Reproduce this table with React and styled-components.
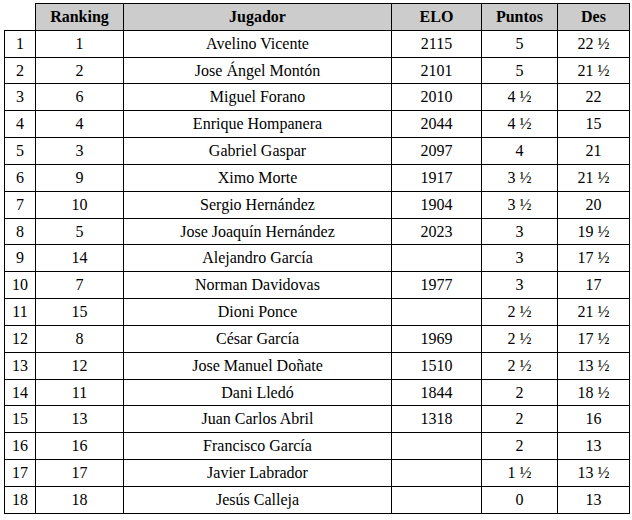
import React from "react";
import styled, { createGlobalStyle } from "styled-components";

const Global = createGlobalStyle`
  html, body { margin: 0; padding: 0; background: #ffffff; }
  body { font-family: "Liberation Serif", "Times New Roman", serif; color: #000; }
`;

const Page = styled.div`
  padding: 3px 0 0 4px;
`;

const Table = styled.table`
  border-collapse: collapse;
  table-layout: fixed;
  width: 625px;
  font-family: "Liberation Serif", "Times New Roman", serif;
  font-size: 16px;
  color: #000;
`;

const Col = styled.col`
  width: ${(p) => p.$w}px;
`;

const Row = styled.tr`
  height: 26.84px;
`;

const HeadCell = styled.th`
  background: ${(p) => (p.$blank ? "transparent" : "#cccccc")};
  border: ${(p) => (p.$blank ? "none" : "1px solid #000")};
  font-weight: bold;
  text-align: center;
  padding: 0 2px;
  vertical-align: middle;
`;

const Cell = styled.td`
  border: 1px solid #000;
  text-align: center;
  padding: 0 2px;
  vertical-align: middle;
  white-space: nowrap;
`;

const data = [
  [1, 1, "Avelino Vicente", "2115", "5", "22 ½"],
  [2, 2, "Jose Ángel Montón", "2101", "5", "21 ½"],
  [3, 6, "Miguel Forano", "2010", "4 ½", "22"],
  [4, 4, "Enrique Hompanera", "2044", "4 ½", "15"],
  [5, 3, "Gabriel Gaspar", "2097", "4", "21"],
  [6, 9, "Ximo Morte", "1917", "3 ½", "21 ½"],
  [7, 10, "Sergio Hernández", "1904", "3 ½", "20"],
  [8, 5, "Jose Joaquín Hernández", "2023", "3", "19 ½"],
  [9, 14, "Alejandro García", "", "3", "17 ½"],
  [10, 7, "Norman Davidovas", "1977", "3", "17"],
  [11, 15, "Dioni Ponce", "", "2 ½", "21 ½"],
  [12, 8, "César García", "1969", "2 ½", "17 ½"],
  [13, 12, "Jose Manuel Doñate", "1510", "2 ½", "13 ½"],
  [14, 11, "Dani Lledó", "1844", "2", "18 ½"],
  [15, 13, "Juan Carlos Abril", "1318", "2", "16"],
  [16, 16, "Francisco García", "", "2", "13"],
  [17, 17, "Javier Labrador", "", "1 ½", "13 ½"],
  [18, 18, "Jesús Calleja", "", "0", "13"],
];

const widths = [31, 88, 268, 90, 76, 72];

export default function App() {
  return (
    <Page>
      <Global />
      <Table>
        <colgroup>
          {widths.map((w, i) => (
            <Col key={i} $w={w} />
          ))}
        </colgroup>
        <thead>
          <Row>
            <HeadCell $blank />
            <HeadCell>Ranking</HeadCell>
            <HeadCell>Jugador</HeadCell>
            <HeadCell>ELO</HeadCell>
            <HeadCell>Puntos</HeadCell>
            <HeadCell>Des</HeadCell>
          </Row>
        </thead>
        <tbody>
          {data.map((r) => (
            <Row key={r[0]}>
              {r.map((v, i) => (
                <Cell key={i}>{v}</Cell>
              ))}
            </Row>
          ))}
        </tbody>
      </Table>
    </Page>
  );
}
